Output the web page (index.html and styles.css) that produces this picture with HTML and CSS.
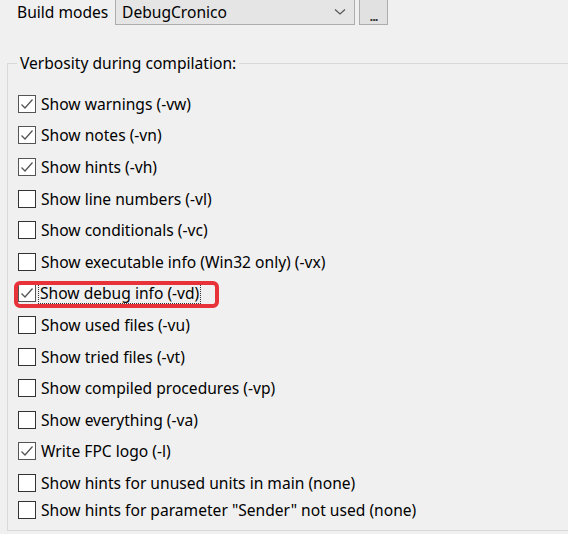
FILE: index.html
```html
<!DOCTYPE html>
<html>
<head>
<meta charset="utf-8">
<link rel="stylesheet" href="styles.css">
</head>
<body>
<div class="top">
  <span class="lbl">Build modes</span>
  <div class="combo"><span>DebugCronico</span>
    <svg class="arrow" width="12" height="8" viewBox="0 0 12 8"><path d="M1 1.5 L6 6 L11 1.5" fill="none" stroke="#555" stroke-width="1.2"/></svg>
  </div>
  <div class="btn"><span class="dots">...</span></div>
</div>
<fieldset class="group">
  <legend>Verbosity during compilation:</legend>
  <div class="row"><span class="cb on"><svg viewBox="0 0 16 16"><path d="M2.5 8.5 L6 12 L13.5 3.5" fill="none" stroke="#555" stroke-width="1.3"/></svg></span><span class="txt">Show warnings (-vw)</span></div>
  <div class="row"><span class="cb on"><svg viewBox="0 0 16 16"><path d="M2.5 8.5 L6 12 L13.5 3.5" fill="none" stroke="#555" stroke-width="1.3"/></svg></span><span class="txt">Show notes (-vn)</span></div>
  <div class="row"><span class="cb on"><svg viewBox="0 0 16 16"><path d="M2.5 8.5 L6 12 L13.5 3.5" fill="none" stroke="#555" stroke-width="1.3"/></svg></span><span class="txt">Show hints (-vh)</span></div>
  <div class="row"><span class="cb"></span><span class="txt">Show line numbers (-vl)</span></div>
  <div class="row"><span class="cb"></span><span class="txt">Show conditionals (-vc)</span></div>
  <div class="row"><span class="cb"></span><span class="txt">Show executable info (Win32 only) (-vx)</span></div>
  <div class="row"><span class="cb on"><svg viewBox="0 0 16 16"><path d="M2.5 8.5 L6 12 L13.5 3.5" fill="none" stroke="#555" stroke-width="1.3"/></svg></span><span class="txt focus">Show debug info (-vd)</span><span class="mark"></span></div>
  <div class="row"><span class="cb"></span><span class="txt">Show used files (-vu)</span></div>
  <div class="row"><span class="cb"></span><span class="txt">Show tried files (-vt)</span></div>
  <div class="row"><span class="cb"></span><span class="txt">Show compiled procedures (-vp)</span></div>
  <div class="row"><span class="cb"></span><span class="txt">Show everything (-va)</span></div>
  <div class="row"><span class="cb on"><svg viewBox="0 0 16 16"><path d="M2.5 8.5 L6 12 L13.5 3.5" fill="none" stroke="#555" stroke-width="1.3"/></svg></span><span class="txt">Write FPC logo (-l)</span></div>
  <div class="row r2"><span class="cb"></span><span class="txt">Show hints for unused units in main (none)</span></div>
  <div class="row r3"><span class="cb"></span><span class="txt">Show hints for parameter "Sender" not used (none)</span></div>
</fieldset>
</body>
</html>
```
FILE: styles.css
```css
html, body {
  margin: 0;
  padding: 0;
  background: #f0f0f0;
  width: 568px;
  height: 534px;
  overflow: hidden;
  font-family: "Noto Sans", "Open Sans", sans-serif;
  font-size: 15.6px;
  color: #000;
}
.top {
  display: flex;
  align-items: flex-start;
  height: 25px;
  margin-top: -1px;
}
.lbl {
  margin-left: 17px;
  margin-top: 1px;
  width: 98px;
  line-height: 24px;
}
.combo {
  box-sizing: border-box;
  width: 240px;
  height: 26px;
  background: #e5e5e5;
  border: 1px solid #adadad;
  display: flex;
  align-items: center;
  justify-content: space-between;
  padding: 0 8px 0 6px;
}
.combo span { line-height: 24px; }
.btn {
  box-sizing: border-box;
  width: 29px;
  height: 26px;
  margin-left: 4px;
  background: #e1e1e1;
  border: 1px solid #adadad;
  display: flex;
  justify-content: center;
  align-items: flex-end;
}
.dots {
  font-size: 13px;
  line-height: 16px;
  letter-spacing: -1px;
  font-weight: bold;
  color: #333;
}
.group {
  box-sizing: border-box;
  margin: 30px 0 0 7px;
  width: 580px;
  height: 477px;
  border: 1px solid #d9d9d9;
  border-radius: 0;
  padding: 16px 0 0 10px;
}
.group legend {
  padding: 0 3px;
  margin-left: -1px;
  line-height: 18px;
}
.row {
  display: flex;
  align-items: center;
  height: 31.6px;
  position: relative;
}
.row.r2 { height: 31px; }
.row.r3 { height: 27px; margin-top: -2px; }
.cb {
  box-sizing: border-box;
  width: 18px;
  height: 18px;
  border: 1px solid #333;
  background: #fff;
  margin-right: 5px;
  flex: none;
  position: relative;
}
.cb.on { border-color: #555; }
.cb svg {
  position: absolute;
  left: 0;
  top: 0;
  width: 16px;
  height: 16px;
}
.txt {
  white-space: nowrap;
  line-height: 20px;
}
.focus {
  outline: 1px dotted #333;
  outline-offset: 0;
  padding: 0 1px;
  margin-left: -2px;
}
.mark {
  position: absolute;
  left: -4px;
  top: 3px;
  width: 205px;
  height: 27px;
  box-sizing: border-box;
  border: 4px solid #e8323a;
  border-radius: 6px;
}
```
